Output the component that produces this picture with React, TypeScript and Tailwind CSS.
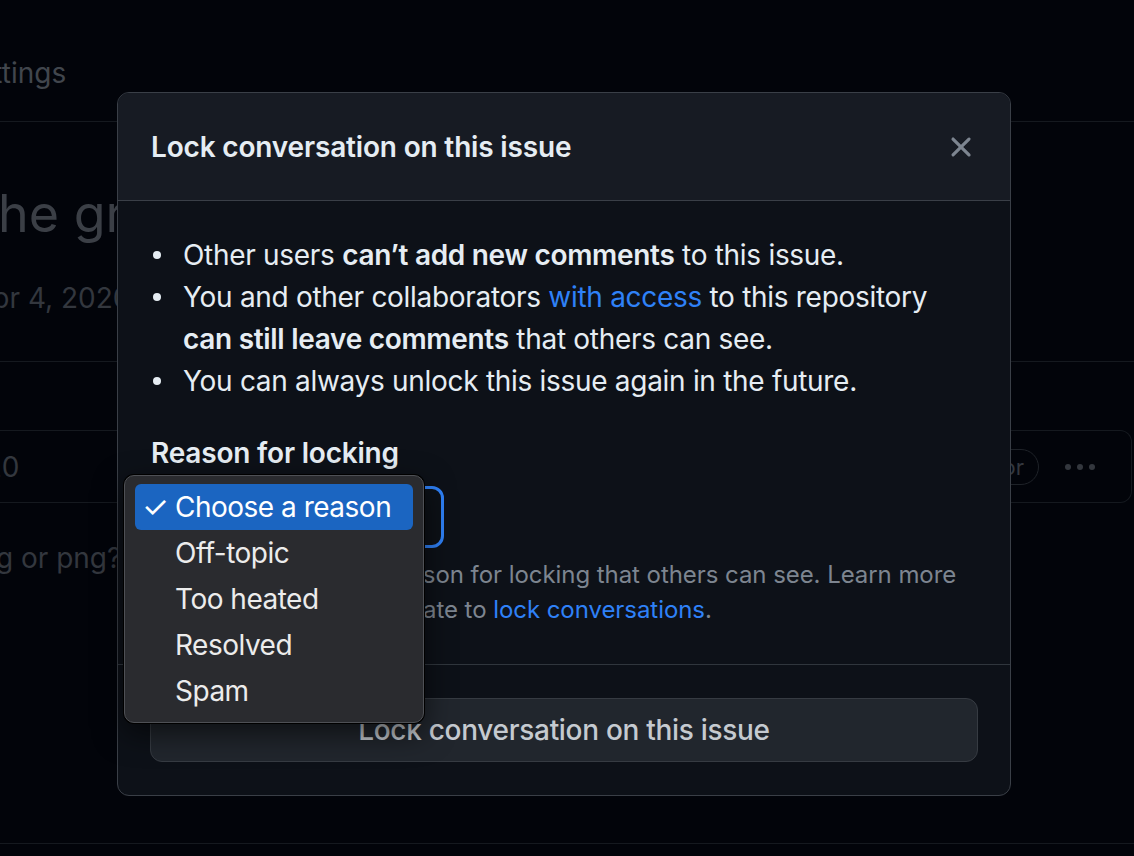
import React from "react";

const XIcon = () => (
  <svg width="34" height="34" viewBox="0 0 16 16" fill="#7d8590">
    <path d="M3.72 3.72a.75.75 0 0 1 1.06 0L8 6.94l3.22-3.22a.749.749 0 0 1 1.275.326.749.749 0 0 1-.215.734L9.06 8l3.22 3.22a.749.749 0 0 1-.326 1.275.749.749 0 0 1-.734-.215L8 9.06l-3.22 3.22a.751.751 0 0 1-1.042-.018.751.751 0 0 1-.018-1.042L6.94 8 3.72 4.78a.75.75 0 0 1 0-1.06Z" />
  </svg>
);

const Bullet = ({ children }: { children: React.ReactNode }) => (
  <li className="flex">
    <span className="w-[32px] shrink-0 flex pt-[17px]">
      <span className="ml-[2px] w-[8px] h-[8px] rounded-full bg-[#e6edf3]" />
    </span>
    <span>{children}</span>
  </li>
);

export default function App() {
  const items = ["Off-topic", "Too heated", "Resolved", "Spam"];
  return (
    <div className="relative w-[1134px] h-[856px] overflow-hidden bg-[#02040a] font-[Inter,sans-serif] text-[28px]">
      {/* background page */}
      <div className="flex flex-col">
        <div className="h-[122px] border-b border-[#15191f] pt-[55px]">
          <span className="block -ml-[41px] leading-[36px] text-[#41464d]">Settings</span>
        </div>
        <div className="h-[240px] border-b border-[#15191f] pt-[60px]">
          <div className="-ml-[2px] text-[52px] leading-[64px] text-[#3b3f46]">he great</div>
          <div className="mt-[34px] -ml-[27px] leading-[36px] text-[#33373e]">Apr 4, 2020</div>
        </div>
        <div className="h-[68px]" />
        <div className="h-[73px] border-y border-[#15191f] mr-[2px] rounded-r-[12px] border-r flex items-center justify-between">
          <span className="-ml-[50px] text-[#33373e]">2020</span>
          <div className="flex items-center gap-[26px] mr-[36px]">
            <span className="h-[36px] px-[14px] rounded-full border border-[#1e2228] text-[22px] leading-[34px] text-[#33373e]">Author</span>
            <div className="flex gap-[6px]">
              <span className="w-[6px] h-[6px] rounded-full bg-[#33373e]" />
              <span className="w-[6px] h-[6px] rounded-full bg-[#33373e]" />
              <span className="w-[6px] h-[6px] rounded-full bg-[#33373e]" />
            </div>
          </div>
        </div>
        <div className="pt-[37px] -ml-[28px] leading-[36px] text-[#33373e]">jpg or png?</div>
        <div className="mt-[267px] border-b border-[#15191f]" />
      </div>

      {/* modal */}
      <div className="absolute left-[117px] top-[92px] w-[894px] rounded-[12px] border border-[#3a3f47] bg-[#0d1118] overflow-hidden text-[#e6edf3]">
        <div className="h-[108px] bg-[#171b23] border-b border-[#3a3f47] flex items-center justify-between pl-[33px] pr-[32px]">
          <h2 className="font-semibold leading-[36px] tracking-[-0.17px]">Lock conversation on this issue</h2>
          <XIcon />
        </div>
        <div className="px-[33px] pt-[33px] pb-[37px]">
          <ul className="leading-[42px] tracking-[-0.3px]">
            <Bullet>
              Other users <b className="font-semibold">can’t add new comments</b> to this issue.
            </Bullet>
            <Bullet>
              You and other collaborators <a className="text-[#2f81f7]">with access</a> to this repository{" "}
              <b className="font-semibold">can still leave comments</b> that others can see.
            </Bullet>
            <Bullet>You can always unlock this issue again in the future.</Bullet>
          </ul>
          <div className="mt-[30px] font-semibold leading-[42px] tracking-[-0.2px]">Reason for locking</div>
          <div className="mt-[12px] w-[293px] h-[62px] rounded-[12px] border-[3px] border-[#2f81f7] bg-[#0d1117]" />
          <p className="mt-[9px] text-[24px] leading-[35px] tracking-[-0.06px] text-[#7d8590]">
            Optionally, choose a reason for locking that others can see. Learn more about when it’s appropriate to{" "}
            <a className="text-[#2f81f7]">lock conversations</a>.
          </p>
        </div>
        <div className="border-t border-[#30363d] px-[32px] pt-[33px] pb-[33px]">
          <button className="w-full h-[64px] rounded-[12px] border border-[#363b42] bg-[#21262d] text-[#c5cad0] font-medium leading-[36px] tracking-[-0.3px]">
            Lock conversation on this issue
          </button>
        </div>
      </div>

      {/* native select menu */}
      <div className="absolute left-[124px] top-[475px] w-[300px] rounded-[10px] border border-[#4e5055] bg-[#2a2b2f] shadow-[0_0_0_1px_#000,0_10px_30px_rgba(0,0,0,0.6)] pt-[8px] pb-[8px] px-[10px] text-[#ececec] tracking-[-0.5px]">
        <div className="h-[46px] rounded-[6px] bg-[#1b65c1] flex items-center text-white">
          <span className="w-[40px] pl-[7px] text-[30px] leading-none">✓</span>
          <span>Choose a reason</span>
        </div>
        {items.map((t) => (
          <div key={t} className="h-[46px] flex items-center pl-[40px]">
            {t}
          </div>
        ))}
      </div>
    </div>
  );
}
